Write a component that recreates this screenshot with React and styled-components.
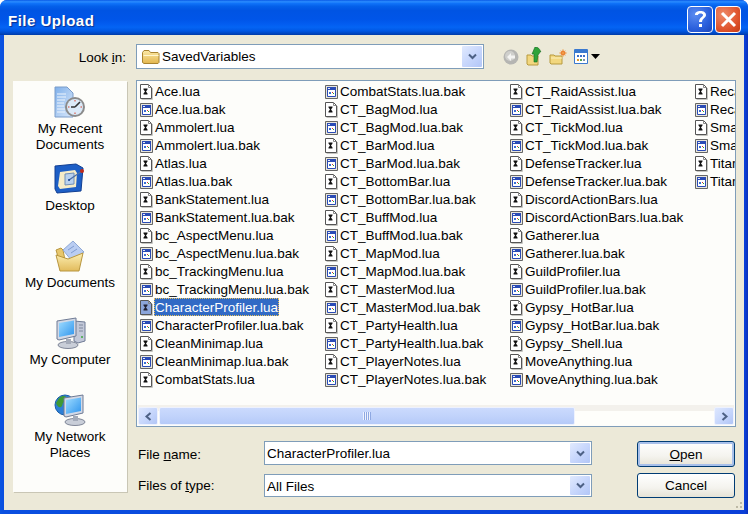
import React from 'react'
import styled, { createGlobalStyle } from 'styled-components'

const Global = createGlobalStyle`
  html, body { margin: 0; padding: 0; background: #fff; }
  * { box-sizing: border-box; }
`

const columns = [
  ['Ace.lua', 'Ace.lua.bak', 'Ammolert.lua', 'Ammolert.lua.bak', 'Atlas.lua', 'Atlas.lua.bak', 'BankStatement.lua', 'BankStatement.lua.bak', 'bc_AspectMenu.lua', 'bc_AspectMenu.lua.bak', 'bc_TrackingMenu.lua', 'bc_TrackingMenu.lua.bak', 'CharacterProfiler.lua', 'CharacterProfiler.lua.bak', 'CleanMinimap.lua', 'CleanMinimap.lua.bak', 'CombatStats.lua'],
  ['CombatStats.lua.bak', 'CT_BagMod.lua', 'CT_BagMod.lua.bak', 'CT_BarMod.lua', 'CT_BarMod.lua.bak', 'CT_BottomBar.lua', 'CT_BottomBar.lua.bak', 'CT_BuffMod.lua', 'CT_BuffMod.lua.bak', 'CT_MapMod.lua', 'CT_MapMod.lua.bak', 'CT_MasterMod.lua', 'CT_MasterMod.lua.bak', 'CT_PartyHealth.lua', 'CT_PartyHealth.lua.bak', 'CT_PlayerNotes.lua', 'CT_PlayerNotes.lua.bak'],
  ['CT_RaidAssist.lua', 'CT_RaidAssist.lua.bak', 'CT_TickMod.lua', 'CT_TickMod.lua.bak', 'DefenseTracker.lua', 'DefenseTracker.lua.bak', 'DiscordActionBars.lua', 'DiscordActionBars.lua.bak', 'Gatherer.lua', 'Gatherer.lua.bak', 'GuildProfiler.lua', 'GuildProfiler.lua.bak', 'Gypsy_HotBar.lua', 'Gypsy_HotBar.lua.bak', 'Gypsy_Shell.lua', 'MoveAnything.lua', 'MoveAnything.lua.bak'],
  ['Recap.lua', 'Recap.lua.bak', 'SmartBuff.lua', 'SmartBuff.lua.bak', 'TitanPanel.lua', 'TitanPanel.lua.bak'],
]

const Window = styled.div`
  position: relative;
  width: 748px;
  height: 514px;
  display: flex;
  flex-direction: column;
  background: linear-gradient(90deg, #0a55e0 0, #0a4fe0 3px, #0a3fd8 745px, #0a2fb8 100%);
  border-radius: 7px 7px 0 0;
  overflow: hidden;
  font-family: "Liberation Sans", Arial, sans-serif;
  font-size: 13.5px;
  color: #000;
`
const TitleBar = styled.div`
  height: 35px;
  flex: none;
  display: flex;
  align-items: center;
  padding: 0 7px 0 8px;
  gap: 2px;
  background: linear-gradient(180deg, #0a5ae6 0%, #2a8cff 5%, #0f72f8 10%, #0460ea 18%, #0054e3 30%, #0055e8 55%, #025cf0 68%, #0464f4 78%, #0058e4 88%, #0048c4 95%, #003ba6 100%);
`
const Title = styled.div`
  flex: 1;
  padding-top: 5px;
  font-weight: 700;
  font-size: 15px;
  letter-spacing: 0.5px;
  color: #fff;
  text-shadow: 1px 1px 1px #0b2f8e;
`
const CaptionButton = styled.div`
  width: 26px;
  height: 27px;
  margin-top: 4px;
  border: 1px solid #fff;
  border-radius: 4px;
  display: flex;
  align-items: center;
  justify-content: center;
  color: #fff;
  background: ${p => p.$close
    ? 'radial-gradient(circle at 30% 30%, #ee8a68, #e0552f 60%, #c53a14)'
    : 'radial-gradient(circle at 30% 30%, #5c8cf0, #2a5fdc 60%, #1c45b8)'};
`
const Body = styled.div`
  flex: 1;
  margin: 0 4px 4px;
  padding: 9px 8px 0 9px;
  background: #ece9d8;
  display: grid;
  grid-template-columns: 114px 1fr;
  grid-template-rows: 25px 347px 57px;
  column-gap: 9px;
  row-gap: 11px;
`
const LookLabel = styled.div`
  align-self: center;
  text-align: right;
  padding: 2px 1px 0 0;
`
const LookRow = styled.div`
  display: flex;
  align-items: center;
`
const Combo = styled.div`
  width: ${p => p.$width}px;
  height: ${p => p.$height}px;
  flex: none;
  display: flex;
  align-items: center;
  background: #fff;
  border: 1px solid #7f9db9;
  padding-left: 2px;
  align-self: ${p => p.$align || 'auto'};
  svg.folder { margin-left: 3px; }
`
const ComboText = styled.div`
  flex: 1;
  padding-left: ${p => p.$indent || 0}px;
  padding-top: ${p => p.$top || 0}px;
  white-space: nowrap;
`
const ComboArrow = styled.div`
  width: 20px;
  align-self: stretch;
  margin: 1px;
  display: flex;
  align-items: center;
  justify-content: center;
  border-radius: 1px;
  background: linear-gradient(135deg, #e1eafe 0%, #c8d7fc 50%, #b2c6f7 100%);
`
const Tools = styled.div`
  display: flex;
  align-items: center;
  margin-left: 19px;
  gap: 7px;
`
const Sidebar = styled.div`
  grid-row: 2 / 4;
  margin: 1px 0 3px;
  padding-top: 5px;
  background: #fdfdfa;
  box-shadow: 1px 1px 0 #c9c6b5;
`
const Place = styled.div`
  height: 77px;
  display: flex;
  flex-direction: column;
  align-items: center;
  line-height: 16px;
  text-align: center;
  svg { margin-bottom: 3px; flex: none; }
`
const Main = styled.div`
  display: flex;
  flex-direction: column;
  background: #fdfdfa;
  border: 1px solid #7f9db9;
  overflow: hidden;
`
const Files = styled.div`
  flex: 1;
  padding: 1px 0 0 2px;
  display: grid;
  grid-auto-flow: column;
  grid-template-rows: repeat(17, 18px);
  grid-auto-columns: 185px;
  align-content: start;
  overflow: hidden;
`
const Row = styled.div`
  display: flex;
  align-items: center;
  height: 18px;
  white-space: nowrap;
  svg { flex: none; }
`
const Name = styled.span`
  margin-left: -1px;
  padding: 0 1px;
  height: 18px;
  line-height: 19px;
  ${p => p.$selected && `
    background: #316ac5;
    color: #fff;
    outline: 1px dotted #e8c25a;
    outline-offset: -1px;
  `}
`
const ScrollBar = styled.div`
  height: 20px;
  flex: none;
  margin: 0 1px 1px;
  display: flex;
  padding-top: 2px;
  background: linear-gradient(180deg, #f3f1ec 0%, #f3f1ec 30%, #fefefb 30%, #fefefb 100%);
  gap: 1px;
`
const ScrollButton = styled.div`
  width: 20px;
  display: flex;
  align-items: center;
  justify-content: center;
  border: 1px solid #eef2fe;
  border-radius: 2px;
  background: linear-gradient(135deg, #dde7fe 0%, #c6d6fc 55%, #b1c5f6 100%);
`
const Thumb = styled.div`
  width: 416px;
  display: flex;
  align-items: center;
  justify-content: center;
  border: 1px solid #eef2fe;
  border-radius: 2px;
  background: linear-gradient(180deg, #cbdafd 0%, #c1d3fb 50%, #b5caf8 100%);
`
const Grip = styled.div`
  width: 8px;
  height: 8px;
  background: repeating-linear-gradient(90deg, #eef2fe 0 1px, #8ea8e2 1px 2px);
`
const Spacer = styled.div`
  flex: 1;
`
const Form = styled.div`
  grid-column: 2;
  margin-top: 3px;
  display: grid;
  grid-template-columns: 128px 328px 143px;
  grid-template-rows: 26px 25px;
  row-gap: 6px;
  justify-content: start;
`
const FormLabel = styled.div`
  padding-left: 2px;
  align-self: center;
`
const ButtonSlot = styled.div`
  margin-left: 45px;
  width: 98px;
`
const Button = styled.div`
  height: 100%;
  display: flex;
  align-items: center;
  justify-content: center;
  border: 1px solid #003c74;
  border-radius: 3px;
  background: linear-gradient(180deg, #fff 0%, #f4f3ee 60%, #e6e3d6 100%);
  box-shadow: ${p => p.$default ? 'inset 0 0 0 2px #a8c0ea' : 'none'};
`
const Resize = styled.div`
  position: absolute;
  right: 4px;
  bottom: 4px;
  width: 12px;
  height: 12px;
  background-image: radial-gradient(circle at 1px 1px, #bdb9a5 1.2px, transparent 1.3px);
  background-size: 4px 4px;
  clip-path: polygon(100% 0, 100% 100%, 0 100%);
`

const Chevron = ({ dir = 'down' }) => (
  <svg width="11" height="9" viewBox="0 0 11 9">
    {dir === 'down' && <path d="M2 2.500 5.500 6 9 2.500" fill="none" stroke="#4d6185" strokeWidth="2" />}
    {dir === 'left' && <path d="M7.500 1 3.500 4.500 7.500 8" fill="none" stroke="#4d6185" strokeWidth="2" />}
    {dir === 'right' && <path d="M3.500 1 7.500 4.500 3.500 8" fill="none" stroke="#4d6185" strokeWidth="2" />}
  </svg>
)

const LuaIcon = ({ selected }) => (
  <svg width="16" height="18" viewBox="0 0 16 18">
    <path d="M1.500 2.500h8l3 3v11h-11z" fill={selected ? '#8ba5da' : '#fff'} stroke="#555" />
    <path d="M9.500 2.500v3h3" fill="none" stroke="#888" />
    <path d="M13.500 6v11.500h-11" fill="none" stroke="#c4c4c0" />
    <path d="M4.500 6.500h4v1L7 9.500l1.500 2v1h-4v-1L6 9.500l-1.500-2z" fill={selected ? '#223' : '#111'} />
  </svg>
)

const BakIcon = () => (
  <svg width="16" height="18" viewBox="0 0 16 18">
    <path d="M1.500 3.500h12v13h-12z" fill="#e8e6dc" stroke="#666" />
    <path d="M3.500 5.500h8v9h-8z" fill="#fff" stroke="#2a4bb5" />
    <path d="M3 5h9v3H3z" fill="#2a4bb5" />
    <path d="M4 6h2v1H4z" fill="#e8ecf8" />
    <path d="M5 10h2v2H5z" fill="#3a6fd0" />
    <path d="M8 10h1v1H8z" fill="#d33" />
    <path d="M9 11h1v1H9z" fill="#2a2" />
  </svg>
)

const FolderIcon = () => (
  <svg className="folder" width="18" height="16" viewBox="1 2 18 15">
    <defs>
      <linearGradient id="fld" x1="0" y1="0" x2="0" y2="1">
        <stop offset="0" stopColor="#fbe9a6" />
        <stop offset="1" stopColor="#e3b64e" />
      </linearGradient>
    </defs>
    <path d="M1.500 5 3 3h5l1.500 2H17l1 1v9l-1 1H3l-1.500-1z" fill="url(#fld)" stroke="#a98431" />
    <path d="M2.500 8h15" stroke="#fff6cf" />
  </svg>
)

const BackIcon = () => (
  <svg width="16" height="16" viewBox="0 0 16 16">
    <circle cx="8" cy="8" r="7.500" fill="#b5b5b2" />
    <circle cx="7" cy="7" r="5" fill="#cfcfcc" />
    <path d="M8 4 4 8l4 4V9.500h4v-3H8z" fill="#f4f4f2" />
  </svg>
)

const UpIcon = () => (
  <svg width="16" height="19" viewBox="0 0 16 19">
    <path d="M1 8h4l1 1h6v9H2l-1-1z" fill="#f2d77e" stroke="#b79a3f" />
    <path d="M9 0c3 0 5 2 5 4h1l-3 4-1 7H8V7H6z" fill="#2ea33a" stroke="#146b20" strokeWidth=".6" />
  </svg>
)

const NewFolderIcon = () => (
  <svg width="18" height="16" viewBox="0 0 18 16">
    <path d="M1 6h4l1 1h7v8H2l-1-1z" fill="#f2d77e" stroke="#b79a3f" />
    <path d="M2 9h11" stroke="#fbf0bd" />
    <circle cx="14" cy="4" r="2.500" fill="#e8722a" />
    <path d="M14 0v8M10 4h8M11.500 1.500l5 5M16.500 1.500l-5 5" stroke="#f0a04a" strokeWidth=".7" />
  </svg>
)

const ViewsIcon = () => (
  <svg width="28" height="15" viewBox="0 0 28 15">
    <path d="M.5.500h13v14H.5z" fill="#fff" stroke="#3a79cf" />
    <path d="M1 1h12v3H1z" fill="#3a79cf" />
    <path d="M3 6h2v2H3zM6 6h2v2H6zM9 6h2v2H9z" fill="#3c6fc8" />
    <path d="M3 10h2v2H3z" fill="#e09a2c" />
    <path d="M6 10h2v2H6z" fill="#4ea24a" />
    <path d="M9 10h2v2H9z" fill="#7d8fae" />
    <path d="M17 5h9l-4.500 5z" fill="#000" />
  </svg>
)

const RecentIcon = () => (
  <svg width="32" height="32" viewBox="0 0 32 32">
    <defs>
      <linearGradient id="rcp" x1="0" y1="0" x2="1" y2="1">
        <stop offset="0" stopColor="#7fb0ea" />
        <stop offset="1" stopColor="#dbe9fb" />
      </linearGradient>
    </defs>
    <path d="M1 1h12l6 6v24H1z" fill="url(#rcp)" stroke="#7a9cc9" />
    <path d="M3 8h9M3 11h9M3 14h8M3 17h7M3 20h7M3 23h8M3 26h8" stroke="#eef5fd" />
    <circle cx="21" cy="21" r="10" fill="#8b8b8b" />
    <circle cx="21" cy="21" r="8" fill="#dceaf8" />
    <path d="M21 21l5-5M21 21h-4" stroke="#333" strokeWidth="1.600" />
    <path d="M21 14v1.500M21 26.500V28M14 21h1.500M26.500 21H28" stroke="#d8402a" />
  </svg>
)

const DesktopIcon = () => (
  <svg width="32" height="32" viewBox="0 0 32 32">
    <path d="M1 3 22 1l7 4-2 23-24 2-2-4z" fill="#1d5fc6" stroke="#123f92" />
    <path d="M6 9l15-2 2 3-1 14-16 2-2-3z" fill="#f6edc8" />
    <path d="M11 11l9-1v11l-9 1z" fill="#b9d2ef" stroke="#6f8fb8" />
    <path d="M15 17 28 8" stroke="#4a6fa8" strokeWidth="1.400" />
    <circle cx="28" cy="8" r="2" fill="#c02a1a" />
    <circle cx="15" cy="17" r="1" fill="#123f92" />
  </svg>
)

const DocsIcon = () => (
  <svg width="32" height="32" viewBox="0 0 32 32">
    <defs>
      <linearGradient id="dcf" x1="0" y1="0" x2="0" y2="1">
        <stop offset="0" stopColor="#fdf0b4" />
        <stop offset="1" stopColor="#e2bb5c" />
      </linearGradient>
    </defs>
    <path d="M2 10l5-2 2 2 2 10H5z" fill="#e8c76c" stroke="#b8963e" />
    <path d="M9 10 19 1l11 11-12 9z" fill="#b9cdf2" stroke="#8fa8d4" />
    <path d="M14 10l6-4M17 13l6-4" stroke="#7f9bd0" />
    <path d="M2 15l12 4 15-6-4 18H6z" fill="url(#dcf)" stroke="#b8963e" />
  </svg>
)

const Computer = () => (
  <g>
    <defs>
      <linearGradient id="scr" x1="0" y1="0" x2="1" y2="1">
        <stop offset="0" stopColor="#9fdcff" />
        <stop offset="1" stopColor="#2f95ee" />
      </linearGradient>
    </defs>
    <ellipse cx="14" cy="28" rx="10" ry="3.500" fill="#c9ced8" stroke="#7f8697" />
    <path d="M12 22h5v5h-5z" fill="#a4abb9" />
    <path d="M3 4l19-3v18l-17 4-2-1z" fill="#d3d9e6" stroke="#6f7b94" />
    <path d="M5 6l15-2.500v13.500L5 20z" fill="url(#scr)" />
  </g>
)

const ComputerIcon = () => (
  <svg width="32" height="32" viewBox="0 0 32 32">
    <path d="M20 4l11 1v19l-7 2-4-2z" fill="#c3c9d9" stroke="#6f7b94" />
    <path d="M25 8h4M25 11h4M25 14h4" stroke="#7f889d" />
    <circle cx="28" cy="20" r="1" fill="#3ea83e" />
    <Computer />
  </svg>
)

const NetworkIcon = () => (
  <svg width="32" height="32" viewBox="0 0 32 32">
    <circle cx="11" cy="11" r="10" fill="#2d7fd6" stroke="#1a5ea8" />
    <path d="M5 4c4-3 7-2 8 0s-1 3-3 4-1 4-3 5-4-1-5-4zM10 15c3-1 6 1 5 4s-3 2-4 0z" fill="#3f9a34" />
    <g transform="translate(7 0)">
      <Computer />
    </g>
  </svg>
)

const places = [
  { icon: <RecentIcon />, label: <>My Recent<br />Documents</> },
  { icon: <DesktopIcon />, label: 'Desktop' },
  { icon: <DocsIcon />, label: 'My Documents' },
  { icon: <ComputerIcon />, label: 'My Computer' },
  { icon: <NetworkIcon />, label: <>My Network<br />Places</> },
]

function App() {
  return (
    <Window>
      <Global />
      <TitleBar>
        <Title>File Upload</Title>
        <CaptionButton>
          <svg width="17" height="21" viewBox="0 0 17 21">
            <path d="M3 6c0-3 2.500-4 5.500-4S14 3.500 14 6c0 3-4 3.500-4 7H7c0-4.500 4-5 4-7 0-1-1-1.500-2.500-1.500S6 5 6 6z" fill="#fff" />
            <path d="M7 15h3v3H7z" fill="#fff" />
          </svg>
        </CaptionButton>
        <CaptionButton $close>
          <svg width="19" height="19" viewBox="0 0 19 19">
            <path d="M3 3l13 13M16 3 3 16" stroke="#fff" strokeWidth="3" />
          </svg>
        </CaptionButton>
      </TitleBar>
      <Body>
        <LookLabel>Look <u>i</u>n:</LookLabel>
        <LookRow>
          <Combo $width={348} $height={25}>
            <FolderIcon />
            <ComboText $indent={2}>SavedVariables</ComboText>
            <ComboArrow><Chevron /></ComboArrow>
          </Combo>
          <Tools>
            <BackIcon />
            <UpIcon />
            <NewFolderIcon />
            <ViewsIcon />
          </Tools>
        </LookRow>
        <Sidebar>
          {places.map((p, i) => (
            <Place key={i}>
              {p.icon}
              <div>{p.label}</div>
            </Place>
          ))}
        </Sidebar>
        <Main>
          <Files>
            {columns.flat().map(name => {
              const selected = name === 'CharacterProfiler.lua'
              return (
                <Row key={name}>
                  {name.endsWith('.bak') ? <BakIcon /> : <LuaIcon selected={selected} />}
                  <Name $selected={selected}>{name}</Name>
                </Row>
              )
            })}
          </Files>
          <ScrollBar>
            <ScrollButton><Chevron dir="left" /></ScrollButton>
            <Thumb><Grip /></Thumb>
            <Spacer />
            <ScrollButton><Chevron dir="right" /></ScrollButton>
          </ScrollBar>
        </Main>
        <Form>
          <FormLabel>File <u>n</u>ame:</FormLabel>
          <Combo $width={328} $height={24} $align="start">
            <ComboText>CharacterProfiler.lua</ComboText>
            <ComboArrow><Chevron /></ComboArrow>
          </Combo>
          <ButtonSlot><Button $default><span><u>O</u>pen</span></Button></ButtonSlot>
          <FormLabel>Files of <u>t</u>ype:</FormLabel>
          <Combo $width={328} $height={23} $align="center">
            <ComboText $top={1}>All Files</ComboText>
            <ComboArrow><Chevron /></ComboArrow>
          </Combo>
          <ButtonSlot><Button>Cancel</Button></ButtonSlot>
        </Form>
      </Body>
      <Resize />
    </Window>
  )
}

export default App
